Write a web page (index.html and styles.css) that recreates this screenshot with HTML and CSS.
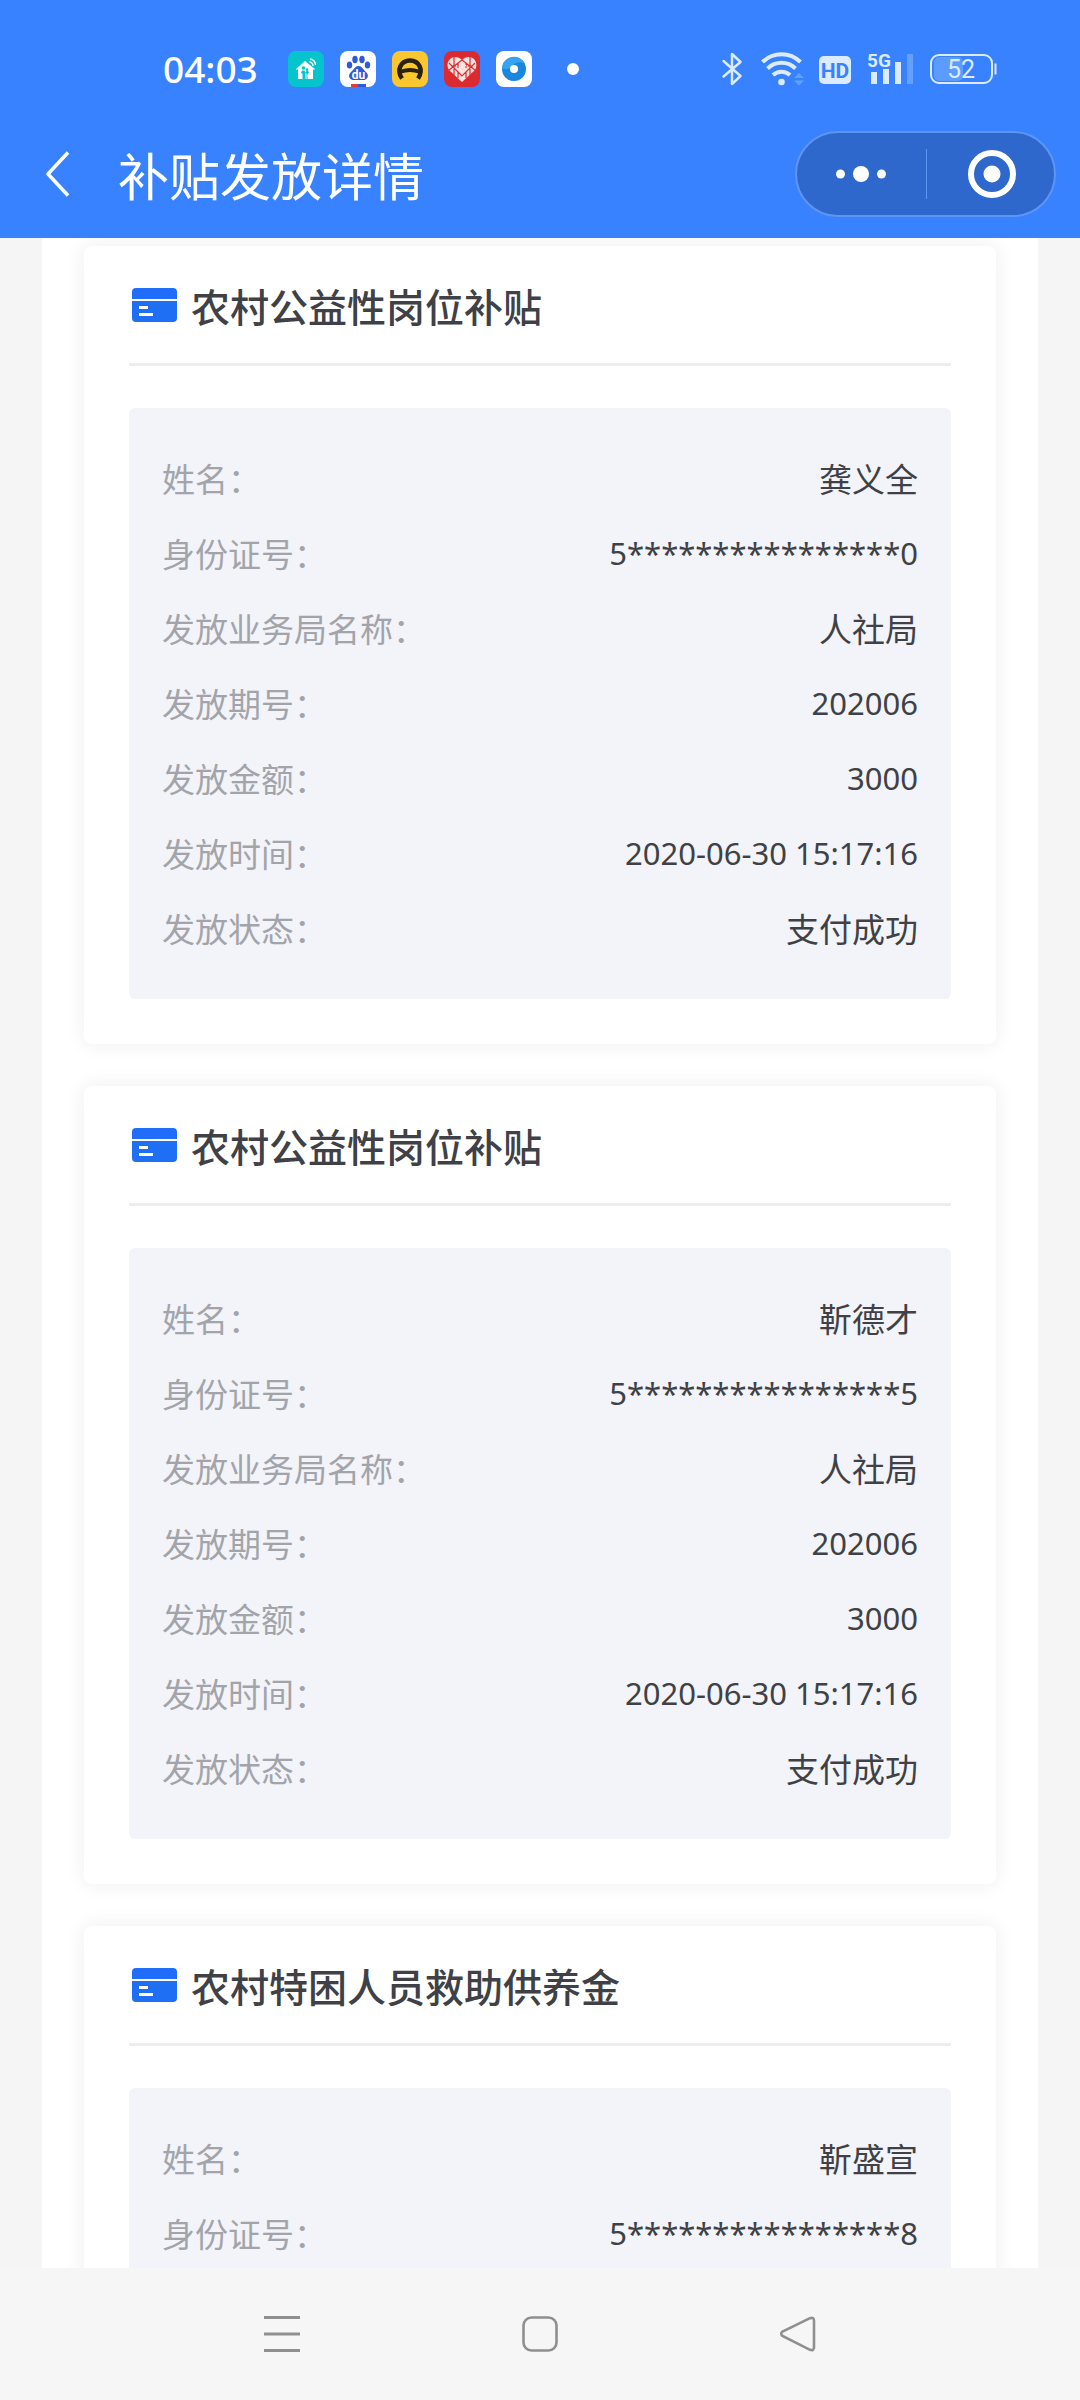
FILE: index.html
```html
<!DOCTYPE html>
<html lang="zh-CN">
<head>
    <meta charset="UTF-8">
    <meta name="viewport" content="width=device-width, initial-scale=1.0">
    <title>补贴发放详情</title>
    <link rel="stylesheet" href="styles.css">
</head>
<body>

    <!-- shared icon for the card titles -->
    <svg class="sprite" aria-hidden="true">
        <symbol id="card-icon" viewBox="0 0 45 34">
            <path d="M4 0h37a4 4 0 0 1 4 4v7H0V4a4 4 0 0 1 4-4z" fill="#1f6dfa"/>
            <path d="M0 13h45v17a4 4 0 0 1-4 4H4a4 4 0 0 1-4-4z" fill="#1f6ff5"/>
            <path d="M7 19.500h9M7 26.500h14" stroke="#fff" stroke-width="3"/>
        </symbol>
    </svg>

    <header class="top">
        <div class="status-bar">
            <div class="status-left">
                <span class="time">04:03</span>
                <div class="apps">
                    <svg width="36" height="36" viewBox="0 0 36 36">
                        <rect width="36" height="36" rx="8" fill="#06c4cb"/>
                        <path d="M17 10L7.500 18.500H10V28h4.500v-5l-1.500-1.500 1-2h2.500l1 2v6.500h1v-5l-1-1.500 1-2h1.500l1 2-1.500 1.500v5H25v-9.500h2.500z" fill="#fff"/>
                        <circle cx="15.500" cy="17" r="1.800" fill="#06c4cb"/>
                        <circle cx="19" cy="18.500" r="1.300" fill="#06c4cb"/>
                        <path d="M21.500 11a4 4 0 0 1 3.500 4M22 8a6.500 6.500 0 0 1 5.500 6" fill="none" stroke="#fff" stroke-width="1.300"/>
                    </svg>
                    <svg width="36" height="36" viewBox="0 0 36 36">
                        <rect width="36" height="36" rx="8" fill="#fff"/>
                        <g fill="#3159d6">
                            <ellipse cx="9.500" cy="14" rx="2.700" ry="3.500"/>
                            <ellipse cx="15" cy="8.500" rx="2.700" ry="3.700"/>
                            <ellipse cx="22" cy="8.500" rx="2.700" ry="3.700"/>
                            <ellipse cx="27.500" cy="14" rx="2.700" ry="3.500"/>
                            <path d="M18.500 15c3.500 0 4.500 3.500 7 5.500 5 4 1.500 9.500-3.500 8.500h-7c-5 1-8.500-4.500-3.500-8.500 2.500-2 3.500-5.500 7-5.500z"/>
                        </g>
                        <text x="18.500" y="28" class="du">du</text>
                        <path d="M11 33h7v3h-7z" fill="#e33b3b"/>
                        <path d="M18 33h8v3h-8z" fill="#3159d6"/>
                    </svg>
                    <svg width="36" height="36" viewBox="0 0 36 36">
                        <rect width="36" height="36" rx="8" fill="#fcc72e"/>
                        <path d="M10 27.500C4 19 9 9.500 18 9.500S32 19 26 27.500" fill="none" stroke="#29220f" stroke-width="4.500"/>
                        <path d="M9 18.500q9-3 18 0v4q-9-3-18 0z" fill="#29220f"/>
                    </svg>
                    <svg width="36" height="36" viewBox="0 0 36 36">
                        <rect width="36" height="36" rx="8" fill="#dc2b30"/>
                        <path d="M18 31L5 19C1 12 6 6 11 6c3 0 5 1 7 3 2-2 4-3 7-3 5 0 10 6 6 13z" fill="#fbe3df"/>
                        <path d="M5 12l13 13 13-13M5 19l13-10 13 10M10 6v18M26 6v18M14 12v5M22 12v5M14 21v6M22 21v6M7 15h5M24 15h5" fill="none" stroke="#dc2b30" stroke-width="1.200"/>
                        <path d="M15 14.500h7M14.500 17.500h7M17 12v8M20 12v8" stroke="#fbe3df" stroke-width="1.300"/>
                    </svg>
                    <svg width="36" height="36" viewBox="0 0 36 36">
                        <rect width="36" height="36" rx="8" fill="#fff"/>
                        <circle cx="18" cy="18" r="12" fill="#1a86dd"/>
                        <path d="M6 17a12 12 0 0 1 23-4c-5-3-12-1-14 4-3 1-7 2-9 0z" fill="#35a3ee"/>
                        <circle cx="18" cy="18" r="4" fill="#fff"/>
                    </svg>
                </div>
                <span class="dot"></span>
            </div>
            <div class="status-right">
                <svg width="22" height="36" viewBox="0 0 22 36">
                    <path d="M1.500 10l17 15-8.500 8V3l8.500 8-17 14.500" fill="none" stroke="#dcebff" stroke-width="2.500" stroke-linejoin="round" stroke-linecap="round"/>
                </svg>
                <svg width="43" height="36" viewBox="0 0 43 36">
                    <g fill="none" stroke="#dcebff" stroke-width="4">
                        <path d="M2.500 11a27 27 0 0 1 38 0"/>
                        <path d="M7.500 17.500a20 20 0 0 1 28 0"/>
                        <path d="M13 24a12.500 12.500 0 0 1 17 0"/>
                    </g>
                    <circle cx="21.500" cy="31" r="3.300" fill="#dcebff"/>
                    <path d="M34 27l5-5 5 5zM34 29.500l5 5 5-5z" fill="#62a0ff"/>
                </svg>
                <svg width="32" height="36" viewBox="0 0 32 36">
                    <rect y="5" width="32" height="28" rx="5" fill="#dcebff"/>
                    <text x="16" y="27" class="hd">HD</text>
                </svg>
                <svg width="47" height="36" viewBox="0 0 47 36">
                    <text x="0" y="16" class="net">5G</text>
                    <path d="M7 21v12M19 18v15M31 11v22" stroke="#dcebff" stroke-width="6"/>
                    <path d="M43 3v30" stroke="#66a0ff" stroke-width="6"/>
                </svg>
                <svg width="67" height="36" viewBox="0 0 67 36">
                    <rect x="4" y="6" width="29" height="24" rx="5" fill="#5c9bff"/>
                    <rect x="1" y="4" width="61" height="28" rx="8" fill="none" stroke="#dcebff" stroke-width="2"/>
                    <path d="M65.500 12.500v11" stroke="#dcebff" stroke-width="2"/>
                    <text x="31" y="27" class="level">52</text>
                </svg>
            </div>
        </div>

        <div class="title-bar">
            <button class="back" aria-label="返回">
                <svg width="24" height="46" viewBox="0 0 24 46">
                    <path d="M22 1.500L2 23l20 21.500" fill="none" stroke="#fff" stroke-width="3.500" stroke-linejoin="round"/>
                </svg>
            </button>
            <h1>补贴发放详情</h1>
            <div class="capsule">
                <button aria-label="更多">
                    <svg width="50" height="50" viewBox="0 0 50 50" fill="#fff">
                        <circle cx="4.500" cy="25" r="4.500"/>
                        <circle cx="25" cy="25" r="8"/>
                        <circle cx="45.500" cy="25" r="4.500"/>
                    </svg>
                </button>
                <button aria-label="关闭">
                    <svg width="54" height="50" viewBox="0 0 54 50">
                        <circle cx="29" cy="25" r="21" fill="none" stroke="#fff" stroke-width="6"/>
                        <circle cx="29" cy="25" r="8.500" fill="#fff"/>
                    </svg>
                </button>
            </div>
        </div>
    </header>

    <main>
        <div class="sheet">
            <section class="card">
                <h2><svg class="card-icon"><use href="#card-icon"/></svg>农村公益性岗位补贴</h2>
                <dl>
                    <div><dt>姓名：</dt><dd>龚义全</dd></div>
                    <div><dt>身份证号：</dt><dd class="num">5****************0</dd></div>
                    <div><dt>发放业务局名称：</dt><dd>人社局</dd></div>
                    <div><dt>发放期号：</dt><dd class="num">202006</dd></div>
                    <div><dt>发放金额：</dt><dd class="num">3000</dd></div>
                    <div><dt>发放时间：</dt><dd class="num">2020-06-30 15:17:16</dd></div>
                    <div><dt>发放状态：</dt><dd>支付成功</dd></div>
                </dl>
            </section>

            <section class="card">
                <h2><svg class="card-icon"><use href="#card-icon"/></svg>农村公益性岗位补贴</h2>
                <dl>
                    <div><dt>姓名：</dt><dd>靳德才</dd></div>
                    <div><dt>身份证号：</dt><dd class="num">5****************5</dd></div>
                    <div><dt>发放业务局名称：</dt><dd>人社局</dd></div>
                    <div><dt>发放期号：</dt><dd class="num">202006</dd></div>
                    <div><dt>发放金额：</dt><dd class="num">3000</dd></div>
                    <div><dt>发放时间：</dt><dd class="num">2020-06-30 15:17:16</dd></div>
                    <div><dt>发放状态：</dt><dd>支付成功</dd></div>
                </dl>
            </section>

            <section class="card">
                <h2><svg class="card-icon"><use href="#card-icon"/></svg>农村特困人员救助供养金</h2>
                <dl>
                    <div><dt>姓名：</dt><dd>靳盛宣</dd></div>
                    <div><dt>身份证号：</dt><dd class="num">5****************8</dd></div>
                </dl>
            </section>
        </div>
    </main>

    <nav class="nav-bar">
        <button aria-label="菜单">
            <svg width="36" height="36" viewBox="0 0 36 36">
                <path d="M0 1.500h36M0 18h36M0 34.500h36" stroke="#8f8f8f" stroke-width="3"/>
            </svg>
        </button>
        <button aria-label="主页">
            <svg width="36" height="36" viewBox="0 0 36 36">
                <rect x="1.500" y="1.500" width="33" height="33" rx="8" fill="none" stroke="#8f8f8f" stroke-width="2.600"/>
            </svg>
        </button>
        <button aria-label="后退">
            <svg width="36" height="36" viewBox="0 0 36 36">
                <path d="M30 2.200L2.500 15.500q-2.500 2 0 4.500L30 33.800q4 1.200 4-2.500V4.700q0-3.700-4-2.500z" fill="none" stroke="#8f8f8f" stroke-width="2.600"/>
            </svg>
        </button>
    </nav>

</body>
</html>
```
FILE: styles.css
```css
* {
    box-sizing: border-box;
}
body {
    display: flex;
    flex-direction: column;
    height: 100vh;
    margin: 0;
    background-color: #f5f5f5;
    color: #404146;
    font-family: "Noto Sans CJK SC", sans-serif;
}
svg {
    display: block;
    flex-shrink: 0;
    overflow: visible;
}
button {
    display: flex;
    align-items: center;
    justify-content: center;
    padding: 0;
    border: none;
    background: none;
    cursor: pointer;
}
.sprite {
    position: absolute;
    width: 0;
    height: 0;
}

/* header */
.top {
    flex-shrink: 0;
    background-color: #3982ff;
    color: #fff;
}
.status-bar {
    display: flex;
    justify-content: space-between;
    align-items: center;
    height: 132px;
    padding: 6px 83px 0 163px;
}
.status-left,
.status-right,
.apps {
    display: flex;
    align-items: center;
}
.time {
    width: 125px;
    font-family: "Noto Sans", sans-serif;
    font-size: 37px;
    font-weight: 500;
    line-height: 48px;
}
.apps {
    gap: 16px;
}
.dot {
    width: 12px;
    height: 12px;
    margin-left: 35px;
    border-radius: 50%;
    background-color: #fff;
}
.status-right {
    gap: 16px;
}
.du,
.hd,
.net,
.level {
    font-family: "Roboto", sans-serif;
    text-anchor: middle;
}
.du {
    fill: #fff;
    font-size: 12px;
    font-weight: 700;
}
.hd {
    fill: #3982ff;
    font-size: 21px;
    font-weight: 700;
}
.net {
    fill: #dcebff;
    font-size: 19px;
    font-weight: 700;
    text-anchor: start;
}
.level {
    fill: #dcebff;
    font-size: 25px;
}
.title-bar {
    display: flex;
    align-items: center;
    height: 106px;
    padding: 0 24px 22px 46px;
}
.back {
    width: 24px;
    height: 84px;
}
h1 {
    flex: 1;
    margin: 0 0 0 48px;
    font-size: 51px;
    font-weight: 400;
    line-height: 84px;
}
.capsule {
    display: flex;
    width: 261px;
    height: 86px;
    border: 2px solid #5d95f3;
    border-radius: 43px;
    background-color: #2e68cc;
}
.capsule button {
    flex: 1;
    position: relative;
}
.capsule button + button::before {
    content: "";
    position: absolute;
    left: 0;
    top: 16px;
    bottom: 16px;
    width: 1px;
    background-color: #5d95f3;
}

/* cards */
main {
    flex: 1;
    min-height: 0;
    overflow: hidden;
    padding: 0 42px;
}
.sheet {
    display: flex;
    flex-direction: column;
    gap: 42px;
    padding: 8px 42px 42px;
    background-color: #fff;
}
.card {
    padding: 0 45px;
    padding-bottom: 45px;
    border-radius: 8px;
    background-color: #fff;
    box-shadow: 0 0 20px rgba(30, 40, 60, 0.08);
}
h2 {
    display: flex;
    align-items: center;
    gap: 14px;
    height: 120px;
    margin: 0 0 42px;
    padding-left: 3px;
    border-bottom: 3px solid #eee;
    font-size: 39px;
    font-weight: 500;
}
.card-icon {
    width: 45px;
    height: 34px;
}
dl {
    margin: 0;
    padding: 33px;
    border-radius: 6px;
    background-color: #f2f4f9;
    font-size: 33px;
    line-height: 75px;
}
dl div {
    display: flex;
    justify-content: space-between;
    height: 75px;
}
dt {
    color: #a3a4aa;
}
dd {
    margin: 0;
}
.num {
    font-family: "Noto Sans", sans-serif;
    font-size: 31px;
}

/* system navigation */
.nav-bar {
    display: flex;
    flex-shrink: 0;
    justify-content: center;
    align-items: center;
    gap: 222px;
    height: 132px;
    background-color: #f6f6f6;
}
```
